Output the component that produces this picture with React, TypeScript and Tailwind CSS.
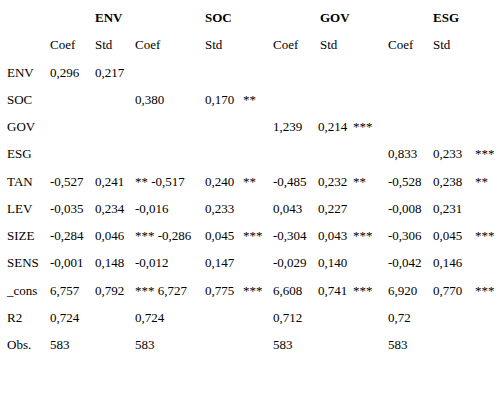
import React from "react"

type Row = {
  label: string
  cells: string[]
}

// 11 data columns: ENV coef/std, SOC coef/std/stars, GOV coef/std/stars, ESG coef/std/stars
// ENV stars are printed in front of the SOC coef (as in the original export)
const rows: Row[] = [
  { label: "ENV", cells: ["0,296", "0,217", "", "", "", "", "", "", "", "", ""] },
  { label: "SOC", cells: ["", "", "0,380", "0,170", "**", "", "", "", "", "", ""] },
  { label: "GOV", cells: ["", "", "", "", "", "1,239", "0,214", "***", "", "", ""] },
  { label: "ESG", cells: ["", "", "", "", "", "", "", "", "0,833", "0,233", "***"] },
  { label: "TAN", cells: ["-0,527", "0,241", "** -0,517", "0,240", "**", "-0,485", "0,232", "**", "-0,528", "0,238", "**"] },
  { label: "LEV", cells: ["-0,035", "0,234", "-0,016", "0,233", "", "0,043", "0,227", "", "-0,008", "0,231", ""] },
  { label: "SIZE", cells: ["-0,284", "0,046", "*** -0,286", "0,045", "***", "-0,304", "0,043", "***", "-0,306", "0,045", "***"] },
  { label: "SENS", cells: ["-0,001", "0,148", "-0,012", "0,147", "", "-0,029", "0,140", "", "-0,042", "0,146", ""] },
  { label: "_cons", cells: ["6,757", "0,792", "*** 6,727", "0,775", "***", "6,608", "0,741", "***", "6,920", "0,770", "***"] },
  { label: "R2", cells: ["0,724", "", "0,724", "", "", "0,712", "", "", "0,72", "", ""] },
  { label: "Obs.", cells: ["583", "", "583", "", "", "583", "", "", "583", "", ""] },
]

const grid =
  "grid grid-cols-[43px_45px_40px_70px_38px_30px_45px_35px_35px_45px_42px_1fr] items-center"

export default function App() {
  return (
    <div className="w-[502px] h-[416px] bg-white text-black pl-[7px] pt-[4px] font-['Liberation_Serif','Times_New_Roman',serif] text-[13px] leading-none">
      {/* group headers */}
      <div className={`${grid} h-[27.25px] font-bold`}>
        <div />
        <div />
        <div>ENV</div>
        <div />
        <div>SOC</div>
        <div />
        <div />
        <div className="ml-[2px]">GOV</div>
        <div />
        <div />
        <div>ESG</div>
        <div />
      </div>

      {/* Coef / Std */}
      <div className={`${grid} h-[27.25px]`}>
        <div />
        <div>Coef</div>
        <div>Std</div>
        <div>Coef</div>
        <div>Std</div>
        <div />
        <div>Coef</div>
        <div className="ml-[2px]">Std</div>
        <div />
        <div>Coef</div>
        <div>Std</div>
        <div />
      </div>

      {rows.map((r) => (
        <div key={r.label} className={`${grid} h-[27.25px]`}>
          <div>{r.label}</div>
          {r.cells.map((c, i) => (
            <div key={i} className="whitespace-nowrap">
              {c}
            </div>
          ))}
        </div>
      ))}
    </div>
  )
}
